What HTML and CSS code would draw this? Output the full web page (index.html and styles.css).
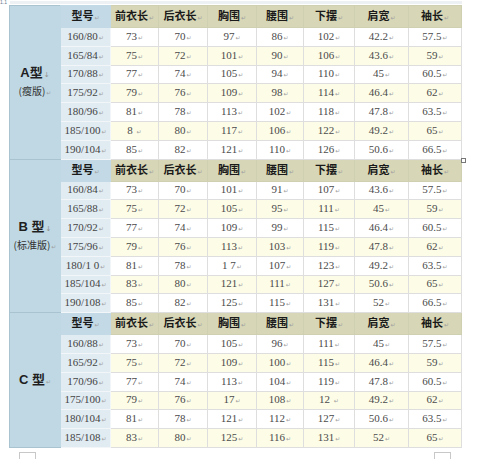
FILE: index.html
```html
<!DOCTYPE html>
<html lang="zh">
<head>
<meta charset="utf-8">
<title>尺码表</title>
<link rel="stylesheet" href="styles.css">
</head>
<body>
<div class="page">
  <div class="topline"></div>
  <div class="corner-mark">1.1</div>
  <table class="size">
    <colgroup>
      <col class="c-type"><col class="c-model"><col class="c48"><col class="c49"><col class="c49"><col class="c47"><col class="c51"><col class="c54"><col class="c53">
    </colgroup>
    <tbody>
      <tr class="head">
        <td class="type" rowspan="8"><div class="tname">A型<span class="br">↓</span></div><div class="tsub">(瘦版)<span class="pm">↵</span></div></td>
        <td class="mh">型号<span class="pm">↵</span></td>
        <td>前衣长<span class="pm">↵</span></td><td>后衣长<span class="pm">↵</span></td><td>胸围<span class="pm">↵</span></td><td>腰围<span class="pm">↵</span></td><td>下摆<span class="pm">↵</span></td><td>肩宽<span class="pm">↵</span></td><td>袖长<span class="pm">↵</span></td>
      </tr>
      <tr class="odd"><td class="m">160/80<span class="pm">↵</span></td><td>73<span class="pm">↵</span></td><td>70<span class="pm">↵</span></td><td>97<span class="pm">↵</span></td><td>86<span class="pm">↵</span></td><td>102<span class="pm">↵</span></td><td>42.2<span class="pm">↵</span></td><td>57.5<span class="pm">↵</span></td></tr>
      <tr class="even"><td class="m">165/84<span class="pm">↵</span></td><td>75<span class="pm">↵</span></td><td>72<span class="pm">↵</span></td><td>101<span class="pm">↵</span></td><td>90<span class="pm">↵</span></td><td>106<span class="pm">↵</span></td><td>43.6<span class="pm">↵</span></td><td>59<span class="pm">↵</span></td></tr>
      <tr class="odd"><td class="m">170/88<span class="pm">↵</span></td><td>77<span class="pm">↵</span></td><td>74<span class="pm">↵</span></td><td>105<span class="pm">↵</span></td><td>94<span class="pm">↵</span></td><td>110<span class="pm">↵</span></td><td>45<span class="pm">↵</span></td><td>60.5<span class="pm">↵</span></td></tr>
      <tr class="even"><td class="m">175/92<span class="pm">↵</span></td><td>79<span class="pm">↵</span></td><td>76<span class="pm">↵</span></td><td>109<span class="pm">↵</span></td><td>98<span class="pm">↵</span></td><td>114<span class="pm">↵</span></td><td>46.4<span class="pm">↵</span></td><td>62<span class="pm">↵</span></td></tr>
      <tr class="odd"><td class="m">180/96<span class="pm">↵</span></td><td>81<span class="pm">↵</span></td><td>78<span class="pm">↵</span></td><td>113<span class="pm">↵</span></td><td>102<span class="pm">↵</span></td><td>118<span class="pm">↵</span></td><td>47.8<span class="pm">↵</span></td><td>63.5<span class="pm">↵</span></td></tr>
      <tr class="even"><td class="m">185/100<span class="pm">↵</span></td><td>8 <span class="pm">↵</span></td><td>80<span class="pm">↵</span></td><td>117<span class="pm">↵</span></td><td>106<span class="pm">↵</span></td><td>122<span class="pm">↵</span></td><td>49.2<span class="pm">↵</span></td><td>65<span class="pm">↵</span></td></tr>
      <tr class="odd"><td class="m">190/104<span class="pm">↵</span></td><td>85<span class="pm">↵</span></td><td>82<span class="pm">↵</span></td><td>121<span class="pm">↵</span></td><td>110<span class="pm">↵</span></td><td>126<span class="pm">↵</span></td><td>50.6<span class="pm">↵</span></td><td>66.5<span class="pm">↵</span></td></tr>

      <tr class="head">
        <td class="type" rowspan="8"><div class="tname">B 型<span class="br">↓</span></div><div class="tsub">(标准版)<span class="pm">↵</span></div></td>
        <td class="mh">型号<span class="pm">↵</span></td>
        <td>前衣长<span class="pm">↵</span></td><td>后衣长<span class="pm">↵</span></td><td>胸围<span class="pm">↵</span></td><td>腰围<span class="pm">↵</span></td><td>下摆<span class="pm">↵</span></td><td>肩宽<span class="pm">↵</span></td><td>袖长<span class="pm">↵</span></td>
      </tr>
      <tr class="odd"><td class="m">160/84<span class="pm">↵</span></td><td>73<span class="pm">↵</span></td><td>70<span class="pm">↵</span></td><td>101<span class="pm">↵</span></td><td>91<span class="pm">↵</span></td><td>107<span class="pm">↵</span></td><td>43.6<span class="pm">↵</span></td><td>57.5<span class="pm">↵</span></td></tr>
      <tr class="even"><td class="m">165/88<span class="pm">↵</span></td><td>75<span class="pm">↵</span></td><td>72<span class="pm">↵</span></td><td>105<span class="pm">↵</span></td><td>95<span class="pm">↵</span></td><td>111<span class="pm">↵</span></td><td>45<span class="pm">↵</span></td><td>59<span class="pm">↵</span></td></tr>
      <tr class="odd"><td class="m">170/92<span class="pm">↵</span></td><td>77<span class="pm">↵</span></td><td>74<span class="pm">↵</span></td><td>109<span class="pm">↵</span></td><td>99<span class="pm">↵</span></td><td>115<span class="pm">↵</span></td><td>46.4<span class="pm">↵</span></td><td>60.5<span class="pm">↵</span></td></tr>
      <tr class="even"><td class="m">175/96<span class="pm">↵</span></td><td>79<span class="pm">↵</span></td><td>76<span class="pm">↵</span></td><td>113<span class="pm">↵</span></td><td>103<span class="pm">↵</span></td><td>119<span class="pm">↵</span></td><td>47.8<span class="pm">↵</span></td><td>62<span class="pm">↵</span></td></tr>
      <tr class="odd"><td class="m">180/1 0<span class="pm">↵</span></td><td>81<span class="pm">↵</span></td><td>78<span class="pm">↵</span></td><td>1 7<span class="pm">↵</span></td><td>107<span class="pm">↵</span></td><td>123<span class="pm">↵</span></td><td>49.2<span class="pm">↵</span></td><td>63.5<span class="pm">↵</span></td></tr>
      <tr class="even"><td class="m">185/104<span class="pm">↵</span></td><td>83<span class="pm">↵</span></td><td>80<span class="pm">↵</span></td><td>121<span class="pm">↵</span></td><td>111<span class="pm">↵</span></td><td>127<span class="pm">↵</span></td><td>50.6<span class="pm">↵</span></td><td>65<span class="pm">↵</span></td></tr>
      <tr class="odd"><td class="m">190/108<span class="pm">↵</span></td><td>85<span class="pm">↵</span></td><td>82<span class="pm">↵</span></td><td>125<span class="pm">↵</span></td><td>115<span class="pm">↵</span></td><td>131<span class="pm">↵</span></td><td>52<span class="pm">↵</span></td><td>66.5<span class="pm">↵</span></td></tr>

      <tr class="head">
        <td class="type" rowspan="7"><div class="tname">C 型<span class="pm">↵</span></div></td>
        <td class="mh">型号<span class="pm">↵</span></td>
        <td>前衣长<span class="pm">↵</span></td><td>后衣长<span class="pm">↵</span></td><td>胸围<span class="pm">↵</span></td><td>腰围<span class="pm">↵</span></td><td>下摆<span class="pm">↵</span></td><td>肩宽<span class="pm">↵</span></td><td>袖长<span class="pm">↵</span></td>
      </tr>
      <tr class="odd"><td class="m">160/88<span class="pm">↵</span></td><td>73<span class="pm">↵</span></td><td>70<span class="pm">↵</span></td><td>105<span class="pm">↵</span></td><td>96<span class="pm">↵</span></td><td>111<span class="pm">↵</span></td><td>45<span class="pm">↵</span></td><td>57.5<span class="pm">↵</span></td></tr>
      <tr class="even"><td class="m">165/92<span class="pm">↵</span></td><td>75<span class="pm">↵</span></td><td>72<span class="pm">↵</span></td><td>109<span class="pm">↵</span></td><td>100<span class="pm">↵</span></td><td>115<span class="pm">↵</span></td><td>46.4<span class="pm">↵</span></td><td>59<span class="pm">↵</span></td></tr>
      <tr class="odd"><td class="m">170/96<span class="pm">↵</span></td><td>77<span class="pm">↵</span></td><td>74<span class="pm">↵</span></td><td>113<span class="pm">↵</span></td><td>104<span class="pm">↵</span></td><td>119<span class="pm">↵</span></td><td>47.8<span class="pm">↵</span></td><td>60.5<span class="pm">↵</span></td></tr>
      <tr class="even"><td class="m">175/100<span class="pm">↵</span></td><td>79<span class="pm">↵</span></td><td>76<span class="pm">↵</span></td><td>17<span class="pm">↵</span></td><td>108<span class="pm">↵</span></td><td>12 <span class="pm">↵</span></td><td>49.2<span class="pm">↵</span></td><td>62<span class="pm">↵</span></td></tr>
      <tr class="odd"><td class="m">180/104<span class="pm">↵</span></td><td>81<span class="pm">↵</span></td><td>78<span class="pm">↵</span></td><td>121<span class="pm">↵</span></td><td>112<span class="pm">↵</span></td><td>127<span class="pm">↵</span></td><td>50.6<span class="pm">↵</span></td><td>63.5<span class="pm">↵</span></td></tr>
      <tr class="even"><td class="m">185/108<span class="pm">↵</span></td><td>83<span class="pm">↵</span></td><td>80<span class="pm">↵</span></td><td>125<span class="pm">↵</span></td><td>116<span class="pm">↵</span></td><td>131<span class="pm">↵</span></td><td>52<span class="pm">↵</span></td><td>65<span class="pm">↵</span></td></tr>
    </tbody>
  </table>
  <div class="handle"></div>
  <div class="footbox left"></div>
  <div class="footbox right"></div>
</div>
</body>
</html>
```
FILE: styles.css
```css
html, body {
  margin: 0;
  padding: 0;
  background: #ffffff;
}
.page {
  position: relative;
  width: 500px;
  height: 459px;
  padding: 5px 0 0 9px;
  box-sizing: border-box;
  overflow: hidden;
  font-family: "Liberation Serif", "Noto Sans CJK SC", serif;
}
.topline {
  position: absolute;
  left: 10px;
  top: 1px;
  width: 452px;
  height: 3px;
  background: #eef1f4;
}
.corner-mark {
  position: absolute;
  left: 0;
  top: 0;
  font-size: 5px;
  line-height: 5px;
  color: #6a7a90;
  font-family: "Liberation Sans", sans-serif;
}
.size {
  border-collapse: collapse;
  table-layout: fixed;
  width: 452px;
  border: 1px solid #a4a4a4;
}
.c-type { width: 51px; }
.c-model { width: 50px; }
.c47 { width: 47px; }
.c48 { width: 48px; }
.c49 { width: 49px; }
.c51 { width: 51px; }
.c53 { width: 53px; }
.c54 { width: 54px; }

.size td {
  padding: 0;
  text-align: center;
  vertical-align: middle;
  border: 1px solid #dedede;
  font-size: 11px;
  color: #4a4a4a;
  white-space: pre;
  overflow: hidden;
  line-height: 12px;
}
.size tr.head { height: 22px; }
.size tr.odd, .size tr.even { height: 18.8px; }

.size tr.head td {
  background: #d7d6b6;
  font-family: "Noto Sans CJK SC", sans-serif;
  font-weight: 700;
  font-size: 11px;
  color: #1a1a1a;
  border-color: #cfcfb2;
}
.size tr.head td.mh {
  background: #c3dae6;
  border-color: #c3dae6;
}
.size tr.head td.type {
  background: #bfd8e4;
  border-color: #a9c3d0;
  border-right-color: #bfd8e4;
  color: #222;
}
.size tr.odd td { background: #ffffff; }
.size tr.even td { background: #fcfce7; }
.size tr td.m {
  background: #e0ebf2;
  border-color: #f2f6f9;
  border-left-color: #c3dae6;
  color: #444;
}
.tname {
  font-family: "Liberation Sans", "Noto Sans CJK SC", sans-serif;
  font-weight: 700;
  font-size: 13px;
  line-height: 15px;
  color: #1e1e1e;
}
.tsub {
  font-family: "Noto Sans CJK SC", sans-serif;
  font-weight: 400;
  font-size: 10px;
  line-height: 13px;
  color: #333;
  margin-top: 1px;
}
.pm {
  font-family: "DejaVu Sans", sans-serif;
  font-size: 6px;
  font-weight: 400;
  color: #a0a0a0;
  margin-left: 1px;
  vertical-align: 0;
}
.br {
  font-family: "DejaVu Sans", sans-serif;
  font-size: 7px;
  font-weight: 400;
  color: #909090;
  margin-left: 1px;
}
.handle {
  position: absolute;
  left: 461px;
  top: 158px;
  width: 3px;
  height: 3px;
  border: 1px solid #777;
  background: #fff;
}
.footbox {
  position: absolute;
  top: 452px;
  width: 15px;
  height: 12px;
  border: 1px solid #c8c8c8;
  border-bottom: none;
}
.footbox.left { left: 19px; }
.footbox.right { left: 434px; }
```
